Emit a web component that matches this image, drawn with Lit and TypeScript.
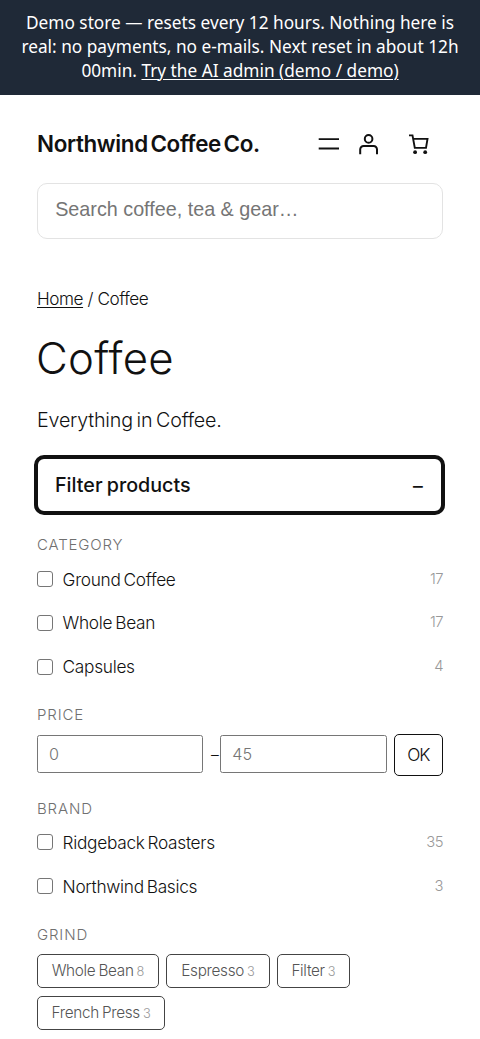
import { LitElement, html, css, svg } from "lit";
import { customElement, property } from "lit/decorators.js";

interface Facet {
  name: string;
  count: number;
  cls: string;
}

@customElement("store-banner")
class StoreBanner extends LitElement {
  static styles = css`
    :host {
      display: block;
      box-sizing: border-box;
      height: 95px;
      padding: 10.6px 16px 0;
      background: #1f2937;
      color: #fff;
      font: 400 17.25px/24.1px "Noto Sans", sans-serif;
      text-align: center;
      white-space: nowrap;
    }
    a {
      color: inherit;
      text-decoration: underline;
      text-underline-offset: 2px;
      text-decoration-thickness: 1px;
    }
  `;
  render() {
    return html`Demo store — resets every 12 hours. Nothing here is<br />real: no payments, no e-mails. Next reset in about
      12h<br />00min. <a>Try the AI admin (demo / demo)</a>`;
  }
}

@customElement("store-header")
class StoreHeader extends LitElement {
  static styles = css`
    :host {
      display: block;
    }
    .bar {
      display: flex;
      align-items: center;
      height: 30px;
    }
    .brand {
      flex: 1;
      font-size: 22.4px;
      font-weight: 600;
      letter-spacing: -0.35px;
      word-spacing: -2.6px;
      line-height: 30px;
      white-space: nowrap;
    }
    svg {
      display: block;
      width: 30px;
      height: 30px;
      fill: none;
      stroke: #111;
      stroke-width: 2;
    }
    .account {
      margin-left: 10px;
    }
    .cart {
      margin: 0 9px 0 20px;
    }
    .search {
      display: flex;
      align-items: center;
      box-sizing: border-box;
      height: 55.4px;
      margin-top: 24.2px;
      padding: 0 17.2px 3px;
      border: 1.23px solid #e3e3e3;
      border-radius: 10px;
      color: #757575;
      font: 19.75px "Liberation Sans", Arial, sans-serif;
    }
  `;
  render() {
    return html`
      <div class="bar">
        <div class="brand">Northwind Coffee Co.</div>
        <svg viewBox="0 0 30 30">${svg`<path stroke-width="1.8" d="M4.7 10.2H25M4.7 19.5H25" />`}</svg>
        <svg class="account" viewBox="0 0 30 30">
          ${svg`<circle cx="14.6" cy="9.9" r="3.8" /><path d="M6.2 25.3V20.4a3.4 3.4 0 0 1 3.4-3.4h10a3.4 3.4 0 0 1 3.4 3.4v4.9" />`}
        </svg>
        <svg class="cart" viewBox="0 0 30 30">
          ${svg`<path stroke-width="1.9" d="M5 6.4h3.5L10.8 18.9h11.2L23.5 9.9H9.1" /><circle cx="11.1" cy="23.2" r="1.9" fill="#111" stroke="none" /><circle cx="21.2" cy="23.2" r="1.9" fill="#111" stroke="none" />`}
        </svg>
      </div>
      <div class="search">Search coffee, tea &amp; gear…</div>
    `;
  }
}

@customElement("facet-list")
class FacetList extends LitElement {
  @property({ attribute: false }) items: Facet[] = [];
  static styles = css`
    :host {
      display: block;
    }
    .row {
      display: flex;
      align-items: center;
      height: 43.75px;
    }
    .box {
      box-sizing: border-box;
      width: 16px;
      height: 16px;
      border: 1.23px solid #767676;
      border-radius: 3px;
    }
    .name {
      flex: 1;
      margin-left: 9.6px;
      font-size: 17.3px;
      font-weight: 300;
      letter-spacing: -0.3px;
      word-spacing: -1.6px;
    }
    .count {
      padding-bottom: 1px;
      color: #999;
      font-size: 14.8px;
      font-weight: 300;
      letter-spacing: -0.5px;
    }
  `;
  render() {
    return this.items.map(
      (f) => html`<div class="row">
        <span class="box"></span><span class="name">${f.name}</span><span class="count">${f.count}</span>
      </div>`
    );
  }
}

@customElement("app-root")
class AppRoot extends LitElement {
  static styles = css`
    :host {
      display: block;
      height: 1039px;
      overflow: hidden;
      background: #fff;
      color: #111;
      font-family: Inter, sans-serif;
    }
    .page {
      padding: 34px 37px 0;
    }
    .crumbs {
      margin-top: 48px;
      font-size: 17.2px;
      font-weight: 300;
      line-height: 24px;
      letter-spacing: -0.45px;
    }
    .crumbs a {
      text-decoration: underline;
      text-underline-offset: 2px;
      text-decoration-thickness: 1px;
    }
    h1 {
      margin: 22px 0 0 -1px;
      font-size: 43.7px;
      font-weight: 300;
      line-height: 52px;
      letter-spacing: 0.3px;
    }
    .intro {
      margin: 20.4px 0 0;
      font-size: 19.7px;
      font-weight: 300;
      line-height: 30px;
      letter-spacing: -0.2px;
      word-spacing: -1.6px;
    }
    .toggle {
      display: flex;
      justify-content: space-between;
      align-items: center;
      box-sizing: border-box;
      height: 60px;
      margin: 20px -2px 0 -3px;
      padding: 0 16px 0.5px 17px;
      border: 4px solid #111;
      border-radius: 10px;
      font-size: 19.7px;
      font-weight: 500;
      letter-spacing: 0;
      word-spacing: -1px;
    }
    .minus {
      font-weight: 400;
      font-size: 21.5px;
      line-height: 20px;
    }
    .title {
      height: 22px;
      color: #707070;
      font-size: 15px;
      font-weight: 300;
      line-height: 20px;
      letter-spacing: 0.85px;
      text-transform: uppercase;
    }
    .category {
      margin-top: 20.4px;
    }
    .price {
      margin-top: 16.4px;
    }
    .brand {
      margin-top: 23px;
    }
    .grind {
      margin-top: 16.6px;
    }
    .range {
      display: flex;
      align-items: center;
      height: 41.5px;
      margin-top: 7px;
    }
    .field {
      box-sizing: border-box;
      width: 166.3px;
      height: 38px;
      margin-bottom: 1px;
      padding-left: 11px;
      border: 1.23px solid #767676;
      border-radius: 2.5px;
      color: #757575;
      font-size: 16.2px;
      font-weight: 300;
      line-height: 36px;
    }
    .dash {
      width: 9.4px;
      margin-left: 7.6px;
      font-size: 15.5px;
      font-weight: 300;
    }
    .ok {
      box-sizing: border-box;
      width: 49.2px;
      height: 41.5px;
      margin-left: auto;
      border: 1.5px solid #111;
      border-radius: 5px;
      font-size: 17.3px;
      font-weight: 300;
      line-height: 39px;
      letter-spacing: -1px;
      text-align: center;
    }
    .chips {
      display: flex;
      flex-wrap: wrap;
      gap: 7.8px 7.4px;
      margin-top: 7px;
    }
    .chip {
      box-sizing: border-box;
      height: 34.5px;
      border: 1.23px solid #444;
      border-radius: 5px;
      color: #555;
      font-size: 15.3px;
      font-weight: 300;
      line-height: 31.5px;
      letter-spacing: -0.3px;
      word-spacing: -1px;
      text-align: center;
      white-space: nowrap;
    }
    .chip small {
      color: #999;
      font-size: 12.8px;
    }
    .whole {
      width: 121.8px;
    }
    .espresso {
      width: 103.5px;
    }
    .filter {
      width: 72.5px;
    }
    .french {
      width: 128px;
    }
  `;

  private categories: Facet[] = [
    { name: "Ground Coffee", count: 17, cls: "" },
    { name: "Whole Bean", count: 17, cls: "" },
    { name: "Capsules", count: 4, cls: "" },
  ];
  private brands: Facet[] = [
    { name: "Ridgeback Roasters", count: 35, cls: "" },
    { name: "Northwind Basics", count: 3, cls: "" },
  ];
  private grinds: Facet[] = [
    { name: "Whole Bean", count: 8, cls: "whole" },
    { name: "Espresso", count: 3, cls: "espresso" },
    { name: "Filter", count: 3, cls: "filter" },
    { name: "French Press", count: 3, cls: "french" },
  ];

  render() {
    return html`
      <store-banner></store-banner>
      <div class="page">
        <store-header></store-header>
        <div class="crumbs"><a>Home</a> / Coffee</div>
        <h1>Coffee</h1>
        <p class="intro">Everything in Coffee.</p>
        <div class="toggle"><span>Filter products</span><span class="minus">−</span></div>
        <div class="title category">Category</div>
        <facet-list .items=${this.categories}></facet-list>
        <div class="title price">Price</div>
        <div class="range">
          <div class="field">0</div>
          <span class="dash">–</span>
          <div class="field">45</div>
          <div class="ok">OK</div>
        </div>
        <div class="title brand">Brand</div>
        <facet-list .items=${this.brands}></facet-list>
        <div class="title grind">Grind</div>
        <div class="chips">
          ${this.grinds.map((g) => html`<div class="chip ${g.cls}">${g.name} <small>${g.count}</small></div>`)}
        </div>
      </div>
    `;
  }
}
